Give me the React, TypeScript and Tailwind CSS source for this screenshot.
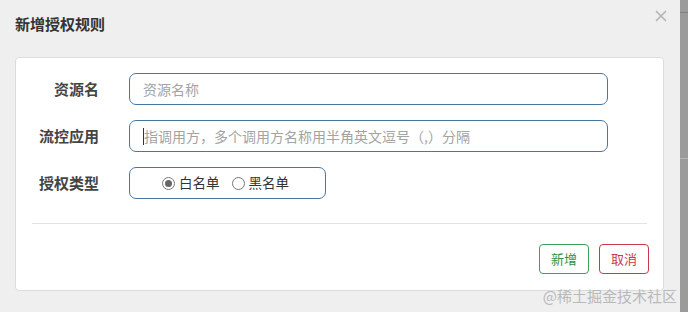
import { X } from "lucide-react";

const font = { fontFamily: '"Noto Sans CJK SC", "Noto Sans", sans-serif' };

function Radio({ checked, label }: { checked?: boolean; label: string }) {
  return (
    <label className="flex items-center gap-[4px]">
      <span className="w-[13px] h-[13px] rounded-full border border-[#777] bg-white flex items-center justify-center">
        {checked && <span className="w-[7px] h-[7px] rounded-full bg-[#666]" />}
      </span>
      <span className="text-[13.5px] text-[#333] leading-none">{label}</span>
    </label>
  );
}

export default function App() {
  return (
    <div className="w-[688px] h-[312px] flex bg-[#efefef] overflow-hidden" style={font}>
      <div className="relative flex-1 flex flex-col rounded-tr-[4px]">
        {/* Header */}
        <div className="h-[57px] flex items-start justify-between pl-[15px] pr-[10px] pt-[14px]">
          <h3 className="text-[15px] font-bold text-[#333] leading-[20px]">新增授权规则</h3>
          <X size={18} strokeWidth={2.2} className="text-[#b5b5b5] mt-[-7px]" />
        </div>

        {/* Body */}
        <div className="ml-[15px] mr-[16px] bg-white border border-[#dcdcdc] rounded-[4px] h-[234px] flex flex-col">
          <div className="pt-[15px] flex flex-col gap-[15px]">
            <div className="flex items-center">
              <div className="w-[83px] text-right text-[15px] font-bold text-[#444]">资源名</div>
              <div className="ml-[30px] w-[479px] h-[32px] border border-[#4a77a2] rounded-[7px] flex items-center px-[13px] text-[14px] text-[#a3a3a3]">
                资源名称
              </div>
            </div>
            <div className="flex items-center">
              <div className="w-[83px] text-right text-[15px] font-bold text-[#444]">流控应用</div>
              <div className="ml-[30px] w-[479px] h-[32px] border border-[#4a77a2] rounded-[7px] flex items-center px-[13px] text-[14px] text-[#a3a3a3]">
                <span className="w-px h-[17px] bg-[#333]" />
                指调用方，多个调用方名称用半角英文逗号（,）分隔
              </div>
            </div>
            <div className="flex items-center">
              <div className="w-[83px] text-right text-[15px] font-bold text-[#444]">授权类型</div>
              <div className="ml-[30px] w-[197px] h-[32px] border border-[#4a77a2] rounded-[7px] flex items-center pl-[32px] gap-[12px]">
                <Radio checked label="白名单" />
                <Radio label="黑名单" />
              </div>
            </div>
          </div>

          <div className="mx-[16px] mt-[24px] border-t border-[#e3e3e3]" />

          <div className="flex justify-end gap-[10px] pr-[14px] mt-[20px]">
            <button className="w-[50px] h-[30px] border border-[#3aa05a] rounded-[4px] text-[13px] text-[#2f9147] bg-white">
              新增
            </button>
            <button className="w-[50px] h-[30px] border border-[#c8394f] rounded-[4px] text-[13px] text-[#c8394f] bg-white">
              取消
            </button>
          </div>
        </div>

        {/* Watermark */}
        <div className="absolute right-[3px] bottom-[9px] text-[15px] text-[#b9b9b9] leading-none">
          @稀土掘金技术社区
        </div>
      </div>

      {/* Page edge behind the dialog */}
      <div className="w-[8px] bg-[#9b9b9b] flex flex-col">
        <div className="h-[13px] border-b border-[#7f7f7f]" />
        <div className="h-[146px] border-b border-[#b5b5b5]" />
      </div>
    </div>
  );
}
